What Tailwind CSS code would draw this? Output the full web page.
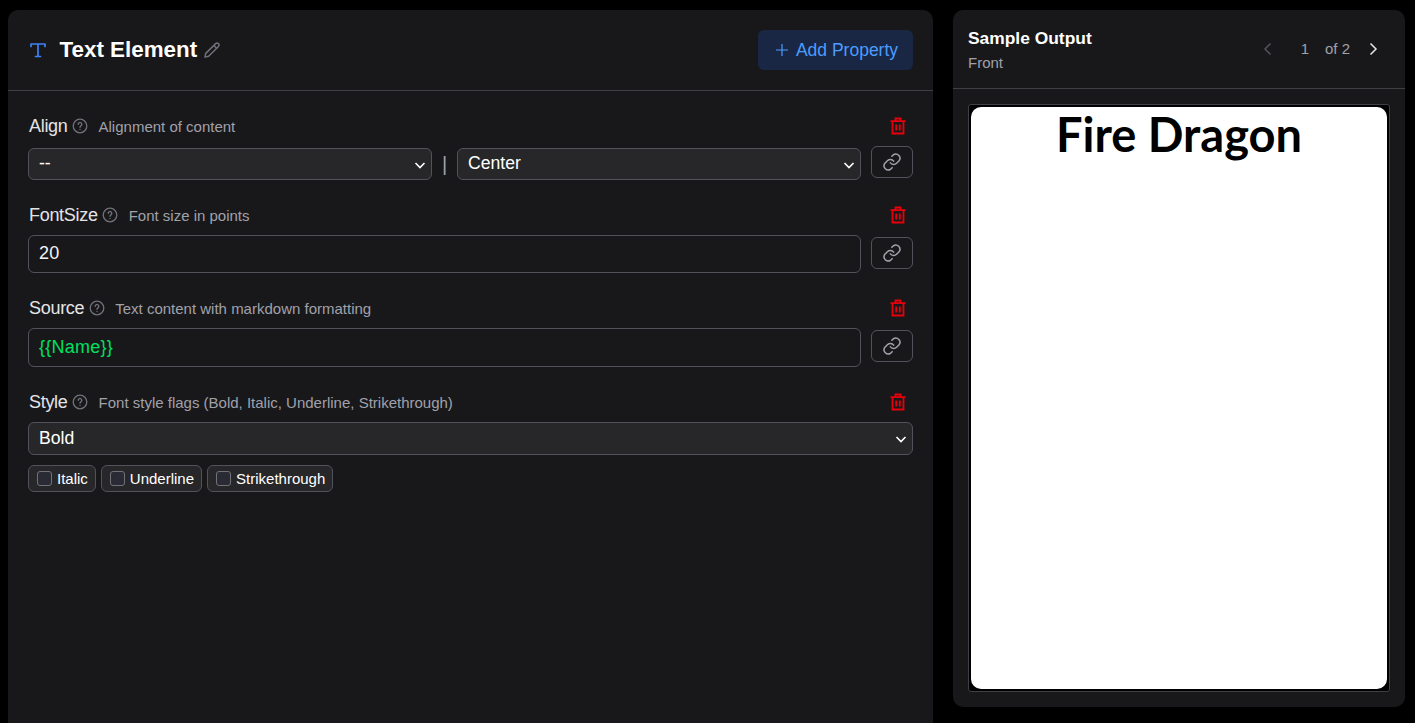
<!DOCTYPE html>
<html lang="en">
<head>
	<meta charset="UTF-8">
	<meta name="viewport" content="width=device-width, initial-scale=1.0">
	<script src="https://cdn.jsdelivr.net/npm/@tailwindcss/browser@4"></script>
	<title>Text Element</title>
</head>
<body class="bg-black h-[723px] overflow-hidden font-['Liberation_Sans',Arial,sans-serif] [color-scheme:dark]">
<div class="flex gap-5 pl-2 pt-[10px] h-[723px] overflow-hidden">

	<!-- editor panel -->
	<section class="w-[925px] h-[760px] shrink-0 bg-[#18181b] rounded-[10px]">
		<header class="h-[81px] flex items-center justify-between pl-5 pr-5 border-b border-[#3f3f46]">
			<div class="flex items-center">
				<svg class="w-5 h-5 text-[#3b82f6]" viewBox="0 0 20 20" fill="none" stroke="currentColor" stroke-width="1.700" stroke-linecap="round" stroke-linejoin="round"><path d="M3 6.500V4h14v2.500M10 4v12.500M7.500 16.500h5"/></svg>
				<h1 class="ml-[11.500px] text-[22.4px] leading-8 font-bold text-white">Text Element</h1>
				<svg class="ml-[6px] w-[18px] h-[18px] text-[#71717a]" viewBox="0 0 24 24" fill="none" stroke="currentColor" stroke-width="1.900" stroke-linecap="round" stroke-linejoin="round"><path d="M16.900 3.500a2.600 2.600 0 0 1 3.700 3.700L7.500 20.300 2.500 21.500l1.200-5z"/><path d="M14.500 6l3.600 3.600"/></svg>
			</div>
			<button class="h-10 w-[155px] pl-[2px] flex items-center justify-center gap-[7px] rounded-md bg-[#1a2744] text-[#4a9dff] text-[17.5px]">
				<svg class="w-[14px] h-[14px]" viewBox="0 0 14 14" fill="none" stroke="currentColor" stroke-width="1.200"><path d="M7 1v12M1 7h12"/></svg>
				Add Property
			</button>
		</header>

		<div class="px-5">
			<!-- Align -->
			<div class="mt-[21px] h-7 flex items-center justify-between">
				<div class="flex items-center pl-px">
					<span class="text-lg text-[#e4e4e7] tracking-[-0.3px]">Align</span>
					<svg class="ml-[4px] w-4 h-4 text-[#71717a]" viewBox="0 0 16 16" fill="none" stroke="currentColor" stroke-width="1.300" stroke-linecap="round"><circle cx="8" cy="8" r="6.800"/><path d="M6.200 6.300a1.800 1.800 0 1 1 2.700 1.600c-.6.400-.9.700-.9 1.400"/><path d="M8 11.500v.1"/></svg>
					<span class="ml-[11px] pt-[2px] text-[15px] text-[#a1a1aa]">Alignment of content</span>
				</div>
				<svg class="w-[18px] h-[18px] mr-[6px] text-[#e7000b]" viewBox="0 0 18 18" fill="none" stroke="currentColor" stroke-width="1.800"><path d="M1.500 4.200h15M6.500 4V1.500h5V4M3.500 4.500v12h11v-12M7.200 7.500v6M10.800 7.500v6"/></svg>
			</div>
			<div class="mt-2 flex items-center">
				<div class="relative w-[404px]">
					<select class="appearance-none w-full h-8 pl-[10px] pr-6 rounded-md border border-[#52525b] bg-[#27272a] text-white text-[17.6px] leading-none"><option>--</option></select>
					<svg class="absolute right-[6px] top-[11px] w-[12px] h-[12px] text-white pointer-events-none" viewBox="0 0 12 12" fill="none" stroke="currentColor" stroke-width="1.600"><path d="M1.500 4 6 8.500 10.500 4"/></svg>
				</div>
				<span class="w-[25px] text-center text-xl text-[#a1a1aa]">|</span>
				<div class="relative w-[404px]">
					<select class="appearance-none w-full h-8 pl-[10px] pr-6 rounded-md border border-[#52525b] bg-[#27272a] text-white text-[17.6px] leading-none"><option>Center</option></select>
					<svg class="absolute right-[6px] top-[11px] w-[12px] h-[12px] text-white pointer-events-none" viewBox="0 0 12 12" fill="none" stroke="currentColor" stroke-width="1.600"><path d="M1.500 4 6 8.500 10.500 4"/></svg>
				</div>
				<button class="ml-[10px] w-[42px] h-8 -mt-[4px] flex items-center justify-center rounded-md border border-[#52525b] text-[#a1a1aa]">
					<svg class="w-5 h-5" viewBox="0 0 24 24" fill="none" stroke="currentColor" stroke-width="1.800" stroke-linecap="round" stroke-linejoin="round"><path d="M10 13a5 5 0 0 0 7.500.5l3-3a5 5 0 0 0-7-7l-1.700 1.700"/><path d="M14 11a5 5 0 0 0-7.500-.5l-3 3a5 5 0 0 0 7 7l1.700-1.700"/></svg>
				</button>
			</div>

			<!-- FontSize -->
			<div class="mt-[21px] h-7 flex items-center justify-between">
				<div class="flex items-center pl-px">
					<span class="text-lg text-[#e4e4e7] tracking-[-0.3px]">FontSize</span>
					<svg class="ml-[4px] w-4 h-4 text-[#71717a]" viewBox="0 0 16 16" fill="none" stroke="currentColor" stroke-width="1.300" stroke-linecap="round"><circle cx="8" cy="8" r="6.800"/><path d="M6.200 6.300a1.800 1.800 0 1 1 2.700 1.600c-.6.400-.9.700-.9 1.400"/><path d="M8 11.500v.1"/></svg>
					<span class="ml-[11px] pt-[2px] text-[15px] text-[#a1a1aa]">Font size in points</span>
				</div>
				<svg class="w-[18px] h-[18px] mr-[6px] text-[#e7000b]" viewBox="0 0 18 18" fill="none" stroke="currentColor" stroke-width="1.800"><path d="M1.500 4.200h15M6.500 4V1.500h5V4M3.500 4.500v12h11v-12M7.200 7.500v6M10.800 7.500v6"/></svg>
			</div>
			<div class="mt-[6px] flex items-center">
				<div class="w-[833px] h-[38px] px-[10px] pb-[2px] flex items-center rounded-md border border-[#52525b] text-lg tracking-[0.3px] text-[#f4f4f5]">20</div>
				<button class="ml-[10px] w-[42px] h-8 -mt-[2px] flex items-center justify-center rounded-md border border-[#52525b] text-[#a1a1aa]">
					<svg class="w-5 h-5" viewBox="0 0 24 24" fill="none" stroke="currentColor" stroke-width="1.800" stroke-linecap="round" stroke-linejoin="round"><path d="M10 13a5 5 0 0 0 7.500.5l3-3a5 5 0 0 0-7-7l-1.700 1.700"/><path d="M14 11a5 5 0 0 0-7.500-.5l-3 3a5 5 0 0 0 7 7l1.700-1.700"/></svg>
				</button>
			</div>

			<!-- Source -->
			<div class="mt-[21px] h-7 flex items-center justify-between">
				<div class="flex items-center pl-px">
					<span class="text-lg text-[#e4e4e7] tracking-[-0.3px]">Source</span>
					<svg class="ml-[5px] w-4 h-4 text-[#71717a]" viewBox="0 0 16 16" fill="none" stroke="currentColor" stroke-width="1.300" stroke-linecap="round"><circle cx="8" cy="8" r="6.800"/><path d="M6.200 6.300a1.800 1.800 0 1 1 2.700 1.600c-.6.400-.9.700-.9 1.400"/><path d="M8 11.500v.1"/></svg>
					<span class="ml-[10px] pt-[2px] text-[15px] text-[#a1a1aa]">Text content with markdown formatting</span>
				</div>
				<svg class="w-[18px] h-[18px] mr-[6px] text-[#e7000b]" viewBox="0 0 18 18" fill="none" stroke="currentColor" stroke-width="1.800"><path d="M1.500 4.200h15M6.500 4V1.500h5V4M3.500 4.500v12h11v-12M7.200 7.500v6M10.800 7.500v6"/></svg>
			</div>
			<div class="mt-[6px] flex items-center">
				<div class="w-[833px] h-[39px] px-[10px] pb-[2px] flex items-center rounded-md border border-[#52525b] text-lg tracking-[0.25px] text-[#00e060]">{{Name}}</div>
				<button class="ml-[10px] w-[42px] h-8 -mt-[3px] flex items-center justify-center rounded-md border border-[#52525b] text-[#a1a1aa]">
					<svg class="w-5 h-5" viewBox="0 0 24 24" fill="none" stroke="currentColor" stroke-width="1.800" stroke-linecap="round" stroke-linejoin="round"><path d="M10 13a5 5 0 0 0 7.500.5l3-3a5 5 0 0 0-7-7l-1.700 1.700"/><path d="M14 11a5 5 0 0 0-7.500-.5l-3 3a5 5 0 0 0 7 7l1.700-1.700"/></svg>
				</button>
			</div>

			<!-- Style -->
			<div class="mt-[21px] h-7 flex items-center justify-between">
				<div class="flex items-center pl-px">
					<span class="text-lg text-[#e4e4e7] tracking-[-0.3px]">Style</span>
					<svg class="ml-[4px] w-4 h-4 text-[#71717a]" viewBox="0 0 16 16" fill="none" stroke="currentColor" stroke-width="1.300" stroke-linecap="round"><circle cx="8" cy="8" r="6.800"/><path d="M6.200 6.300a1.800 1.800 0 1 1 2.700 1.600c-.6.400-.9.700-.9 1.400"/><path d="M8 11.500v.1"/></svg>
					<span class="ml-[11px] pt-[2px] text-[15px] text-[#a1a1aa]">Font style flags (Bold, Italic, Underline, Strikethrough)</span>
				</div>
				<svg class="w-[18px] h-[18px] mr-[6px] text-[#e7000b]" viewBox="0 0 18 18" fill="none" stroke="currentColor" stroke-width="1.800"><path d="M1.500 4.200h15M6.500 4V1.500h5V4M3.500 4.500v12h11v-12M7.200 7.500v6M10.800 7.500v6"/></svg>
			</div>
			<div class="relative mt-[6px]">
				<select class="appearance-none block w-full h-[33px] pl-[10px] pr-6 rounded-md border border-[#52525b] bg-[#27272a] text-white text-[17.6px] leading-none"><option>Bold</option></select>
				<svg class="absolute right-[6px] top-[11px] w-[12px] h-[12px] text-white pointer-events-none" viewBox="0 0 12 12" fill="none" stroke="currentColor" stroke-width="1.600"><path d="M1.500 4 6 8.500 10.500 4"/></svg>
			</div>
			<div class="mt-[10px] flex gap-[5px]">
				<label class="h-[27px] pl-2 pr-[7px] flex items-center gap-[5px] rounded-md border border-[#52525b] bg-[#27272a] text-[15px] text-white"><span class="w-[15px] h-[15px] rounded-[3px] border border-[#71717a] bg-[#2a2a35]"></span><span class="pt-px">Italic</span></label>
				<label class="h-[27px] pl-2 pr-[7px] flex items-center gap-[5px] rounded-md border border-[#52525b] bg-[#27272a] text-[15px] text-white"><span class="w-[15px] h-[15px] rounded-[3px] border border-[#71717a] bg-[#2a2a35]"></span><span class="pt-px">Underline</span></label>
				<label class="h-[27px] pl-2 pr-[7px] flex items-center gap-[5px] rounded-md border border-[#52525b] bg-[#27272a] text-[15px] text-white"><span class="w-[15px] h-[15px] rounded-[3px] border border-[#71717a] bg-[#2a2a35]"></span><span class="pt-px">Strikethrough</span></label>
			</div>
		</div>
	</section>

	<!-- preview panel -->
	<aside class="w-[452px] h-[697px] shrink-0 bg-[#18181b] rounded-[10px] flex flex-col">
		<header class="h-[79px] pl-[15px] pr-[24px] flex items-start justify-between border-b border-[#3f3f46]">
			<div class="pt-[17px]">
				<h2 class="font-bold text-[17.4px] leading-[22px] text-white">Sample Output</h2>
				<p class="mt-[4px] text-[15px] leading-5 text-[#a1a1aa]">Front</p>
			</div>
			<div class="pt-[29px] flex items-center text-[15px] leading-5 text-[#a1a1aa]">
				<svg class="w-4 h-4 text-[#52525b]" viewBox="0 0 16 16" fill="none" stroke="currentColor" stroke-width="1.500"><path d="M10.500 2.500 5 8l5.500 5.500"/></svg>
				<span class="ml-[25px]">1</span>
				<span class="ml-[16px]">of 2</span>
				<svg class="ml-[15px] w-4 h-4 text-[#e4e4e7]" viewBox="0 0 16 16" fill="none" stroke="currentColor" stroke-width="1.500"><path d="M5.500 2.500 11 8l-5.500 5.500"/></svg>
			</div>
		</header>
		<div class="mx-[15px] mt-[15px] h-[588px] rounded-[3px] border border-[#3f3f46] bg-black p-[2px]">
			<div class="h-full bg-white rounded-[10px] text-center text-black font-['Lato',sans-serif] font-bold text-[47px] leading-[55px]">Fire Dragon</div>
		</div>
	</aside>
</div>
</body>
</html>
